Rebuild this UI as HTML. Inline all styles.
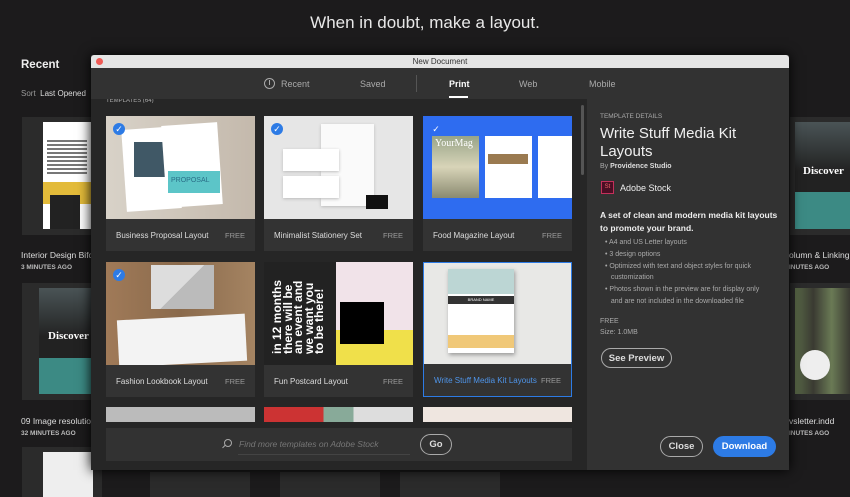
<!DOCTYPE html>
<html><head><style>
*{margin:0;padding:0;box-sizing:border-box}
body{width:850px;height:497px;background:#1c1b1c;font-family:"Liberation Sans",sans-serif;position:relative;overflow:hidden;color:#ddd}
.a{position:absolute}
.lbl{position:absolute;left:0;right:0;bottom:0;height:32px;background:#333;font-size:8px;color:#ddd;padding:12px 0 0 10px}
.lbl span{position:absolute;right:10px;top:12px;color:#999;font-size:7.5px}
.card{position:absolute;width:149px;height:135px;background:#333;overflow:hidden}
.img{position:absolute;left:0;top:0;width:100%;height:103px}
.chk{position:absolute;left:7px;top:7px;width:12px;height:12px;border-radius:50%;background:#2d7be5;color:#fff;font-size:9px;line-height:12px;text-align:center}
.btn{position:absolute;border:1.5px solid #aaa;border-radius:12px;color:#ddd;font-size:9.5px;font-weight:bold;display:flex;align-items:center;justify-content:center}
</style></head><body>
<div class="a" style="left:0;right:0;top:13px;text-align:center;font-size:17px;color:#e8e8e8">When in doubt, make a layout.</div>
<div class="a" style="left:21px;top:59px;font-size:11.5px;font-weight:bold;color:#eee">Recent</div>
<div class="a" style="left:21px;top:89px;font-size:8px;color:#999">Sort <b style="color:#ddd;font-weight:normal">&nbsp;Last Opened</b></div>
<div class="a" style="left:22px;top:117px;width:80px;height:118px;background:#2b2b2b"></div>
<div class="a" style="left:43px;top:122px;width:50px;height:107px;background:#fff"></div>
<div class="a" style="left:43px;top:182px;width:50px;height:22px;background:#e3bb3a"></div>
<div class="a" style="left:50px;top:195px;width:30px;height:34px;background:#222"></div>
<div class="a" style="left:47px;top:140px;width:40px;height:35px;background:repeating-linear-gradient(#777 0 2px,#fff 2px 4px)"></div>
<div class="a" style="left:21px;top:250px;font-size:8.5px;color:#ddd">Interior Design Bifc</div>
<div class="a" style="left:21px;top:264px;font-size:6.5px;color:#bbb;font-weight:bold">3 MINUTES AGO</div>
<div class="a" style="left:22px;top:283px;width:80px;height:117px;background:#2b2b2b"></div>
<div class="a" style="left:39px;top:288px;width:55px;height:70px;background:linear-gradient(#4a5456,#222 70%)"></div>
<div class="a" style="left:39px;top:358px;width:55px;height:36px;background:#3c8a84"></div>
<div class="a" style="left:48px;top:330px;font-size:11px;font-family:'Liberation Serif';color:#fff;font-weight:bold">Discover</div>
<div class="a" style="left:21px;top:416px;font-size:8.5px;color:#ddd">09 Image resolutio</div>
<div class="a" style="left:21px;top:430px;font-size:6.5px;color:#bbb;font-weight:bold">32 MINUTES AGO</div>
<div class="a" style="left:22px;top:447px;width:80px;height:50px;background:#2b2b2b"></div>
<div class="a" style="left:43px;top:452px;width:50px;height:45px;background:#eee"></div>
<div class="a" style="left:790px;top:117px;width:60px;height:118px;background:#2b2b2b"></div>
<div class="a" style="left:795px;top:122px;width:55px;height:70px;background:linear-gradient(#4a5456,#222 70%)"></div>
<div class="a" style="left:795px;top:192px;width:55px;height:37px;background:#3c8a84"></div>
<div class="a" style="left:803px;top:165px;font-size:11px;font-family:'Liberation Serif';color:#fff;font-weight:bold">Discover</div>
<div class="a" style="left:789px;top:250px;font-size:8.5px;color:#ddd">olumn &amp; Linking</div>
<div class="a" style="left:789px;top:264px;font-size:6.5px;color:#bbb;font-weight:bold">INUTES AGO</div>
<div class="a" style="left:790px;top:283px;width:60px;height:117px;background:#2b2b2b"></div>
<div class="a" style="left:795px;top:288px;width:55px;height:106px;background:linear-gradient(90deg,#5a6a48,#3a3a32,#6a7a55,#3a3a32)"></div>
<div class="a" style="left:800px;top:350px;width:30px;height:30px;border-radius:50%;background:#eee"></div>
<div class="a" style="left:789px;top:416px;font-size:8.5px;color:#ddd">vsletter.indd</div>
<div class="a" style="left:789px;top:430px;font-size:6.5px;color:#bbb;font-weight:bold">INUTES AGO</div>
<div class="a" style="left:150px;top:472px;width:100px;height:25px;background:#2b2b2b"></div>
<div class="a" style="left:400px;top:472px;width:100px;height:25px;background:#2b2b2b"></div>
<div class="a" style="left:280px;top:472px;width:100px;height:25px;background:#2b2b2b"></div>

<div class="a" style="left:91px;top:55px;width:698px;height:415px;background:#262626;box-shadow:0 0 12px #000">
 <div class="a" style="left:0;top:0;width:698px;height:13px;background:#e4e4e4;border-radius:3px 3px 0 0;font-size:8px;color:#333;text-align:center;line-height:13px">New Document</div>
 <div class="a" style="left:5px;top:3px;width:7px;height:7px;border-radius:50%;background:#f05a55"></div>
 <div class="a" style="left:0;top:13px;width:698px;height:31px;background:#323232;font-size:9px;color:#aaa">
  <div class="a" style="left:173px;top:10px;width:11px;height:11px;border:1px solid #aaa;border-radius:50%"></div>
  <div class="a" style="left:178px;top:12px;width:1px;height:5px;background:#aaa"></div>
  <div class="a" style="left:190px;top:11px">Recent</div>
  <div class="a" style="left:269px;top:11px">Saved</div>
  <div class="a" style="left:325px;top:7px;width:1px;height:17px;background:#555"></div>
  <div class="a" style="left:358px;top:11px;color:#fff;font-weight:bold">Print</div>
  <div class="a" style="left:358px;top:28px;width:19px;height:2px;background:#fff"></div>
  <div class="a" style="left:428px;top:11px">Web</div>
  <div class="a" style="left:498px;top:11px">Mobile</div>
 </div>
 <div class="a" style="left:15px;top:44px;font-size:6px;color:#aaa;line-height:4px;height:4px;overflow:hidden">TEMPLATES (64)</div>
 <div class="a" style="left:496px;top:44px;width:202px;height:371px;background:#323232"></div>
 <div class="a" style="left:490px;top:50px;width:3px;height:70px;background:#555;border-radius:2px"></div>
</div>

<div class="card" style="left:106px;top:116px"><div class="img" style="background:linear-gradient(90deg,#d8d2c8,#c4b9ac)"></div>
 <div class="a" style="left:18px;top:12px;width:55px;height:82px;background:#fff;transform:rotate(-4deg)"></div>
 <div class="a" style="left:28px;top:26px;width:42px;height:35px;background:#405866"></div>
 <div class="a" style="left:58px;top:8px;width:56px;height:82px;background:#fff;transform:rotate(-4deg)"></div>
 <div class="a" style="left:62px;top:55px;width:52px;height:22px;background:#5cc5c8;font-size:7px;color:#2a6f88;padding:6px 3px">PROPOSAL</div>
 <div class="chk">✓</div>
 <div class="lbl">Business Proposal Layout<span>FREE</span></div></div>
<div class="card" style="left:264px;top:116px"><div class="img" style="background:#e6e6e6"></div>
 <div class="a" style="left:57px;top:8px;width:53px;height:82px;background:#fafafa;box-shadow:0 1px 3px #bbb"></div>
 <div class="a" style="left:19px;top:33px;width:56px;height:22px;background:#fff;box-shadow:0 1px 3px #bbb"></div>
 <div class="a" style="left:19px;top:60px;width:56px;height:22px;background:#fff;box-shadow:0 1px 3px #bbb"></div>
 <div class="a" style="left:102px;top:79px;width:22px;height:14px;background:#111"></div>
 <div class="chk">✓</div>
 <div class="lbl">Minimalist Stationery Set<span>FREE</span></div></div>
<div class="card" style="left:423px;top:116px"><div class="img" style="background:#2e6cf0"></div>
 <div class="a" style="left:9px;top:20px;width:47px;height:62px;background:linear-gradient(#98a488,#d8d4b8 50%,#8a8a70)"></div>
 <div class="a" style="left:62px;top:20px;width:47px;height:62px;background:#fff"></div>
 <div class="a" style="left:65px;top:38px;width:40px;height:10px;background:#9a7a50"></div>
 <div class="a" style="left:115px;top:20px;width:34px;height:62px;background:#fff"></div>
 <div class="a" style="left:12px;top:22px;font-size:10px;font-family:'Liberation Serif';color:#fff">YourMag</div>
 <div class="chk" style="background:none">✓</div>
 <div class="lbl">Food Magazine Layout<span>FREE</span></div></div>
<div class="card" style="left:106px;top:262px"><div class="img" style="background:linear-gradient(90deg,#a07a58,#8a6a4c,#a58462)"></div>
 <div class="a" style="left:45px;top:3px;width:63px;height:44px;background:linear-gradient(135deg,#ddd 50%,#bbb 50%)"></div>
 <div class="a" style="left:12px;top:55px;width:128px;height:47px;background:#f3f3f3;transform:rotate(-3deg)"></div>
 <div class="chk">✓</div>
 <div class="lbl">Fashion Lookbook Layout<span>FREE</span></div></div>
<div class="card" style="left:264px;top:262px"><div class="img" style="background:#222"></div>
 <div class="a" style="left:72px;top:0;width:77px;height:103px;background:#f1e3e9"></div>
 <div class="a" style="left:72px;top:68px;width:77px;height:35px;background:#f0e04a"></div>
 <div class="a" style="left:76px;top:40px;width:44px;height:42px;background:#000"></div>
 <div class="a" style="left:8px;top:92px;font-size:12px;color:#fff;transform:rotate(-90deg);transform-origin:0 0;white-space:nowrap;line-height:10.5px;font-weight:bold">in 12 months<br>there will be<br>an event and<br>we want you<br>to be there!</div>
 <div class="lbl">Fun Postcard Layout<span>FREE</span></div></div>
<div class="card" style="left:423px;top:262px;border:1.5px solid #2d7be5"><div class="img" style="background:#e8e8e6"></div>
 <div class="a" style="left:24px;top:6px;width:66px;height:84px;background:#fff;box-shadow:1px 2px 4px #999"></div>
 <div class="a" style="left:24px;top:6px;width:66px;height:25px;background:#bcd6d4"></div>
 <div class="a" style="left:24px;top:33px;width:66px;height:8px;background:#333;font-size:4px;color:#fff;text-align:center;line-height:8px">BRAND NAME</div>
 <div class="a" style="left:24px;top:72px;width:66px;height:13px;background:#f0c878"></div>
 <div class="lbl" style="color:#4f95ea">Write Stuff Media Kit Layouts<span>FREE</span></div></div>
<div class="a" style="left:106px;top:407px;width:149px;height:15px;background:#bbb"></div>
<div class="a" style="left:264px;top:407px;width:149px;height:15px;background:linear-gradient(90deg,#c33 0 40%,#8a9 40% 60%,#ddd 60%)"></div>
<div class="a" style="left:423px;top:407px;width:149px;height:15px;background:#efe6e0"></div>
<div class="a" style="left:106px;top:428px;width:466px;height:33px;background:#323232"></div>
<div class="a" style="left:224px;top:439px;width:8px;height:8px;border:1.2px solid #aaa;border-radius:50%"></div>
<div class="a" style="left:222px;top:446px;width:4px;height:1.2px;background:#aaa;transform:rotate(-45deg)"></div>
<div class="a" style="left:239px;top:439px;font-size:8.5px;color:#777;font-style:italic">Find more templates on Adobe Stock</div>
<div class="a" style="left:238px;top:454px;width:172px;height:1px;background:#444"></div>
<div class="btn" style="left:420px;top:434px;width:32px;height:21px;border-radius:11px">Go</div>
<div class="a" style="left:600px;top:113px;font-size:6.5px;color:#aaa">TEMPLATE DETAILS</div>
<div class="a" style="left:600px;top:125px;font-size:15px;color:#f0f0f0;line-height:18px">Write Stuff Media Kit<br>Layouts</div>
<div class="a" style="left:600px;top:163px;font-size:7px;color:#aaa">By <b style="color:#ddd">Providence Studio</b></div>
<div class="a" style="left:601px;top:181px;width:13px;height:13px;background:#4a0e24;border:1px solid #c3305a;font-size:6px;color:#e66;text-align:center;line-height:11px">St</div>
<div class="a" style="left:620px;top:183px;font-size:9px;color:#eee">Adobe Stock</div>
<div class="a" style="left:600px;top:209px;font-size:8.5px;color:#eee;line-height:13px;font-weight:bold">A set of clean and modern media kit layouts<br>to promote your brand.</div>
<div class="a" style="left:605px;top:237px;font-size:7px;color:#aaa;line-height:11.8px">• A4 and US Letter layouts<br>• 3 design options<br>• Optimized with text and object styles for quick<br>&nbsp;&nbsp;&nbsp;customization<br>• Photos shown in the preview are for display only<br>&nbsp;&nbsp;&nbsp;and are not included in the downloaded file</div>
<div class="a" style="left:600px;top:316px;font-size:7px;color:#aaa;line-height:11px">FREE<br>Size: 1.0MB</div>
<div class="btn" style="left:601px;top:348px;width:71px;height:20px">See Preview</div>
<div class="btn" style="left:660px;top:436px;width:43px;height:21px">Close</div>
<div class="btn" style="left:713px;top:436px;width:63px;height:21px;background:#2d7be5;border-color:#2d7be5;color:#fff">Download</div>
</body></html>
